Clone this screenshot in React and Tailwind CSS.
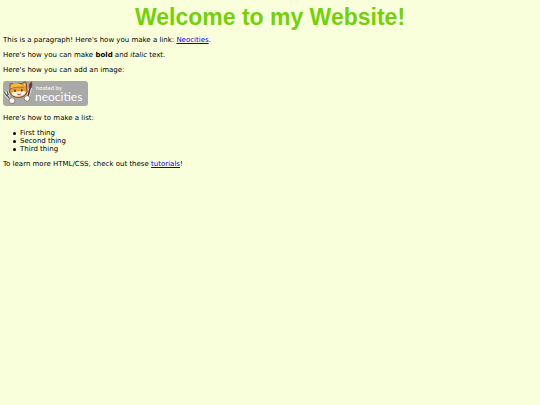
import React from 'react';

const things = ['First thing', 'Second thing', 'Third thing'];

const NeocitiesBadge = () => (
  <svg
    viewBox="0 0 85 25"
    className="block w-[85px] h-[25px] font-[Lato,sans-serif]"
    role="img"
    aria-label="Hosted by Neocities"
  >
    <rect width="85" height="25" rx="3" fill="#a9a9a9" />

    {/* Paint brush */}
    <path d="M24.8 16 L27.4 7" stroke="#f4f0ea" strokeWidth="3" strokeLinecap="round" />
    <path d="M24.8 16 L27.4 6" stroke="#4c3528" strokeWidth="1.6" strokeLinecap="round" />
    <path d="M26.2 6.6 C25.8 4.4 26.6 2.2 28.4 0.8 C29.4 3 29.2 5.4 28 7.2 Z" fill="#8f2a22" stroke="#5c3a30" strokeWidth="0.5" />

    {/* Cat head */}
    <path
      d="M7.2 8 L7 3.6 C7.2 2.4 8 2.2 9 2.8 L11 3.6 C13 2.2 16 1.8 18.6 2.8 L21.6 1.2 C22.8 0.8 23.4 1.4 23.4 2.4 L23.4 7 C25 10.4 23.6 13.8 20.2 15.4 C16.4 17 11 16.6 8.4 13.8 C6.6 12 6.2 10 7.2 8 Z"
      fill="#ee9a3a"
      stroke="#6b4218"
      strokeWidth="0.9"
    />
    <path d="M22.2 2.6 L22.2 5 L20.4 3.8 Z" fill="#f8d7a0" />
    <path d="M7.4 7.6 C7 4.2 10.4 2.2 14 2.2 C17 2.2 18.8 3.6 19.4 5.8 C15.4 5.4 11.4 6 7.4 7.6 Z" fill="#f0bd3d" />
    <path d="M7.2 8 C11.4 6 15.8 5.6 20.6 6.6" fill="none" stroke="#96601f" strokeWidth="0.7" />
    <path d="M8.6 11.8 C10.4 10.2 13 11 14.8 10.4 C17 9.4 20.4 9.4 22.6 10.8 C22.6 13.8 18.6 15.6 14.8 15.6 C11.4 15.6 8.8 14.2 8.6 11.8 Z" fill="#fff3dd" />
    <ellipse cx="12" cy="9.8" rx="0.8" ry="1.3" fill="#3f2b1c" />
    <ellipse cx="18.8" cy="9.4" rx="0.8" ry="1.3" fill="#3f2b1c" />
    <path d="M13.8 12.6 C15 13.4 17 13.2 18 12.2 C17.8 14.8 14.6 15.2 13.8 12.6 Z" fill="#b95342" />

    {/* Fork and paws */}
    <path d="M1.2 11.2 L3.6 14.4 L5.2 13.4 L3.8 9.6 M3.8 14.2 L8.6 20" fill="none" stroke="#f4f0ea" strokeWidth="2.6" />
    <path d="M1.2 11.2 L3.6 14.4 L5.2 13.4 L3.8 9.6 M3.8 14.2 L8.6 20" fill="none" stroke="#5a5654" strokeWidth="1.2" />
    <circle cx="9" cy="19.6" r="3" fill="#fffaf0" stroke="#625b56" strokeWidth="0.7" />
    <circle cx="24" cy="17.4" r="2.8" fill="#fffaf0" stroke="#625b56" strokeWidth="0.7" />

    <text x="33" y="9" fontSize="6" fill="#ffffff">hosted by</text>
    <text x="32" y="20" fontSize="12" fill="#ffffff">neocities</text>
  </svg>
);

export default function App() {
  return (
    <div className="min-h-screen bg-[#f9ffdb] px-[3px] pt-1 text-[7px] leading-[8px] text-black font-['DejaVu_Sans',sans-serif]">
      <h1 className="text-center text-[23px] leading-[26px] font-bold text-[#75cf0c] font-['Liberation_Sans',sans-serif]">
        Welcome to my Website!
      </h1>

      <main className="mt-[6px] flex flex-col gap-[7px]">
        <p>
          This is a paragraph! Here's how you make a link:{' '}
          <a href="https://neocities.org" className="text-[#0000ee] underline">Neocities</a>.
        </p>
        <p>
          Here's how you can make <strong className="font-bold">bold</strong> and <em>italic</em> text.
        </p>
        <p>Here's how you can add an image:</p>
        <div className="pb-px">
          <NeocitiesBadge />
        </div>
        <p>Here's how to make a list:</p>
        <ul className="pl-[10px]">
          {things.map((thing) => (
            <li
              key={thing}
              className="flex items-center gap-1 before:size-[3px] before:rounded-full before:bg-black"
            >
              {thing}
            </li>
          ))}
        </ul>
        <p>
          To learn more HTML/CSS, check out these{' '}
          <a href="https://neocities.org/tutorials" className="text-[#0000ee] underline">tutorials</a>!
        </p>
      </main>
    </div>
  );
}
